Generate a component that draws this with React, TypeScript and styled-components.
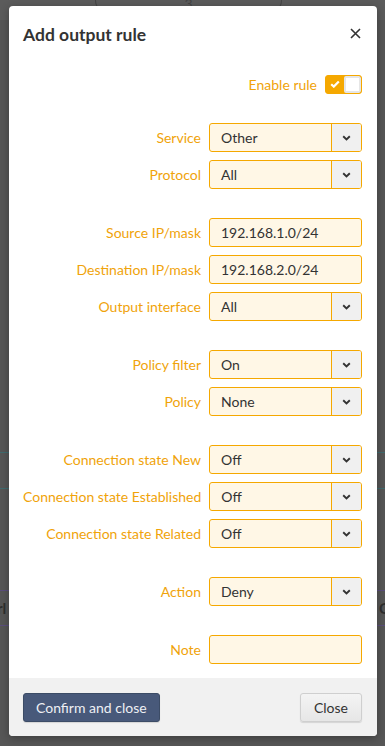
import React from 'react';
import styled, { createGlobalStyle } from 'styled-components';

const ORANGE = '#f5a800';
const LABEL = '#f0a30a';

const GlobalStyle = createGlobalStyle`
  html, body {
    margin: 0;
    padding: 0;
  }
  body {
    font-family: Lato, 'Open Sans', sans-serif;
    width: 385px;
    height: 746px;
    overflow: hidden;
  }
`;

type Field = { label: string; value: string; kind: 'select' | 'input' };

const groups: Field[][] = [
    [
        { label: 'Service', value: 'Other', kind: 'select' },
        { label: 'Protocol', value: 'All', kind: 'select' },
    ],
    [
        { label: 'Source IP/mask', value: '192.168.1.0/24', kind: 'input' },
        { label: 'Destination IP/mask', value: '192.168.2.0/24', kind: 'input' },
        { label: 'Output interface', value: 'All', kind: 'select' },
    ],
    [
        { label: 'Policy filter', value: 'On', kind: 'select' },
        { label: 'Policy', value: 'None', kind: 'select' },
    ],
    [
        { label: 'Connection state New', value: 'Off', kind: 'select' },
        { label: 'Connection state Established', value: 'Off', kind: 'select' },
        { label: 'Connection state Related', value: 'Off', kind: 'select' },
    ],
    [{ label: 'Action', value: 'Deny', kind: 'select' }],
    [{ label: 'Note', value: '', kind: 'input' }],
];

const Chevron: React.FC = () => (
    <svg width="9" height="6" viewBox="0 0 9 6">
        <polyline points="1.2,1.3 4.5,4.5 7.8,1.3" fill="none" stroke="#333" strokeWidth="1.9" />
    </svg>
);

const App: React.FC = () => {
    return (
        <>
            <GlobalStyle />
            <StyledPage>
                <BackPage>
                    <BackTopBar>
                        <BackTab>3</BackTab>
                    </BackTopBar>
                    <BackLine $color="#3f6a6e" $top={432} />
                    <BackLine $color="#3f6a6e" $top={35} />
                    <BackRow>
                        <span>rl</span>
                        <span>C</span>
                    </BackRow>
                </BackPage>

                <Modal>
                    <Header>
                        <Title>Add output rule</Title>
                        <CloseIcon aria-label="close">
                            <svg width="11" height="11" viewBox="0 0 11 11">
                                <path d="M1 1 L10 10 M10 1 L1 10" stroke="#333" strokeWidth="1.6" />
                            </svg>
                        </CloseIcon>
                    </Header>
                    <Body>
                        <EnableRow>
                            <Label>Enable rule</Label>
                            <Toggle>
                                <ToggleOn>
                                    <svg width="10" height="8" viewBox="0 0 10 8">
                                        <polyline points="1.2,4.2 3.8,6.6 8.8,1.4" fill="none" stroke="#fff" strokeWidth="2.2" />
                                    </svg>
                                </ToggleOn>
                                <ToggleKnob />
                            </Toggle>
                        </EnableRow>
                        {groups.map((group, gi) => (
                            <Group key={gi}>
                                {group.map((f) => (
                                    <Row key={f.label}>
                                        <Label>{f.label}</Label>
                                        {f.kind === 'select' ? (
                                            <Select>
                                                <SelectValue>{f.value}</SelectValue>
                                                <SelectArrow>
                                                    <Chevron />
                                                </SelectArrow>
                                            </Select>
                                        ) : (
                                            <Input>{f.value}</Input>
                                        )}
                                    </Row>
                                ))}
                            </Group>
                        ))}
                    </Body>
                    <Footer>
                        <Button $primary>Confirm and close</Button>
                        <Button>Close</Button>
                    </Footer>
                </Modal>
            </StyledPage>
        </>
    );
};

export default App;

const StyledPage = styled.div`
    position: relative;
    width: 385px;
    height: 746px;
    background-color: #565656;
    overflow: hidden;
`;

const BackPage = styled.div`
    display: flex;
    flex-direction: column;
`;

const BackTopBar = styled.div`
    height: 20px;
    background-color: #5b5b5b;
    display: flex;
    justify-content: center;
`;

const BackTab = styled.div`
    width: 185px;
    height: 14px;
    margin-left: -8px;
    border: 1px solid #444;
    border-top: none;
    border-radius: 0 0 18px 18px;
    color: #444;
    font-size: 14px;
    line-height: 8px;
    text-align: center;
`;

const BackLine = styled.div<{ $color: string; $top: number }>`
    height: 1px;
    margin-top: ${(p) => p.$top}px;
    background-color: ${(p) => p.$color};
`;

const BackRow = styled.div`
    margin-top: 101px;
    height: 34px;
    border-top: 1px solid #5a4e7c;
    border-bottom: 1px solid #5a4e7c;
    display: flex;
    justify-content: space-between;
    align-items: center;
    color: #2e2e2e;
    font-size: 15px;
    font-weight: 700;
    span:first-child {
        margin-left: -3px;
    }
    span:last-child {
        margin-right: -4px;
    }
`;

const Modal = styled.div`
    position: absolute;
    top: 6px;
    left: 9px;
    width: 368px;
    background-color: #fff;
    border-radius: 4px;
    overflow: hidden;
    box-shadow: 0 2px 8px rgba(0, 0, 0, 0.3);
`;

const Header = styled.div`
    height: 56px;
    padding: 0 16px 0 14px;
    display: flex;
    justify-content: space-between;
    align-items: center;
`;

const Title = styled.h4`
    margin: 0;
    font-size: 17.5px;
    font-weight: 700;
    color: #333;
`;

const CloseIcon = styled.span`
    display: flex;
    align-items: center;
    margin-top: -2px;
`;

const Body = styled.div`
    padding: 12px 15px 14px 14px;
    display: flex;
    flex-direction: column;
    gap: 29px;
`;

const EnableRow = styled.div`
    height: 20px;
    display: flex;
    justify-content: flex-end;
    align-items: center;
    gap: 8px;
`;

const Toggle = styled.div`
    width: 37px;
    height: 19px;
    box-sizing: border-box;
    border: 1px solid ${ORANGE};
    border-radius: 3px;
    background-color: ${ORANGE};
    display: flex;
    overflow: hidden;
`;

const ToggleOn = styled.div`
    width: 18px;
    display: flex;
    justify-content: center;
    align-items: center;
`;

const ToggleKnob = styled.div`
    flex: 1;
    background-color: #fff;
    border: 2px solid #e6e6e6;
    border-radius: 2px;
`;

const Group = styled.div`
    display: flex;
    flex-direction: column;
    gap: 8px;
`;

const Row = styled.div`
    display: grid;
    grid-template-columns: 1fr 153px;
    column-gap: 8px;
    align-items: center;
    height: 29px;
`;

const Label = styled.label`
    text-align: right;
    font-size: 14px;
    color: ${LABEL};
    white-space: nowrap;
`;

const fieldBase = `
    height: 29px;
    box-sizing: border-box;
    border: 1px solid ${ORANGE};
    border-radius: 3px;
    background-color: #fff7e6;
    font-size: 14px;
    color: #333;
`;

const Input = styled.div`
    ${fieldBase};
    padding: 0 11px;
    display: flex;
    align-items: center;
`;

const Select = styled.div`
    ${fieldBase};
    display: flex;
    overflow: hidden;
`;

const SelectValue = styled.div`
    flex: 1;
    padding: 0 11px;
    display: flex;
    align-items: center;
`;

const SelectArrow = styled.div`
    width: 29px;
    border-left: 1px solid ${ORANGE};
    background-color: #f0f0f0;
    display: flex;
    justify-content: center;
    align-items: center;
`;

const Footer = styled.div`
    height: 58px;
    box-sizing: border-box;
    padding: 15px 15px 14px 14px;
    background-color: #f1f1f1;
    display: flex;
    justify-content: space-between;
    align-items: flex-start;
`;

const Button = styled.button<{ $primary?: boolean }>`
    height: 29px;
    padding: 0 ${(p) => (p.$primary ? 12 : 13)}px;
    border-radius: 3px;
    font-family: Lato, 'Open Sans', sans-serif;
    font-size: 14px;
    border: 1px solid ${(p) => (p.$primary ? '#3c4c66' : '#cfcfcf')};
    background: ${(p) => (p.$primary ? '#48597a' : 'linear-gradient(#f4f4f4, #e6e6e6)')};
    color: ${(p) => (p.$primary ? '#eef0f4' : '#333')};
    box-shadow: 0 1px 1px rgba(0, 0, 0, 0.12);
`;
